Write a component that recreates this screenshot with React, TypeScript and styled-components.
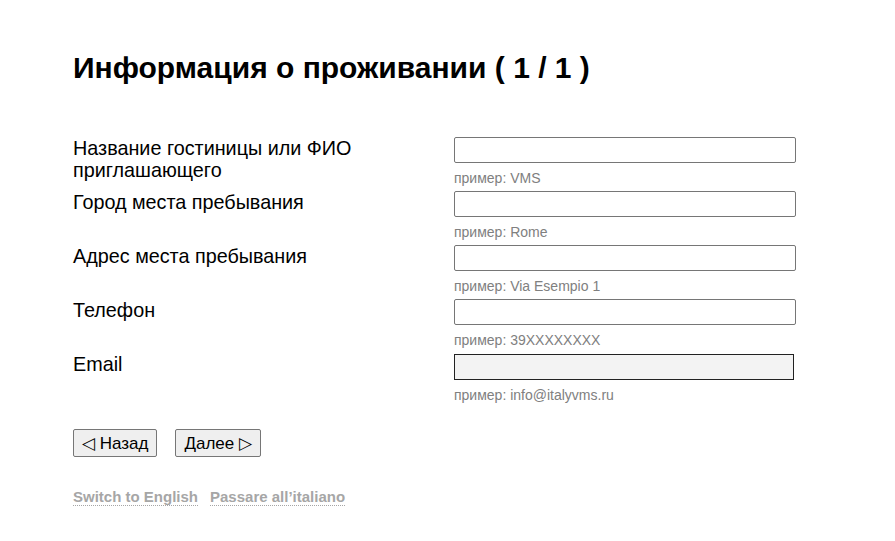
import styled, { createGlobalStyle } from "styled-components"

const GlobalStyle = createGlobalStyle`
    body {
        margin: 0;
        background: #ffffff;
        font-family: "Liberation Sans", Arial, sans-serif;
        color: #000000;
    }
`

type FieldType = {
    label: string
    hint: string
    readOnly?: boolean
}

const fields: FieldType[] = [
    { label: "Название гостиницы или ФИО приглашающего", hint: "пример: VMS" },
    { label: "Город места пребывания", hint: "пример: Rome" },
    { label: "Адрес места пребывания", hint: "пример: Via Esempio 1" },
    { label: "Телефон", hint: "пример: 39XXXXXXXX" },
    { label: "Email", hint: "пример: info@italyvms.ru", readOnly: true },
]

export default function App() {
    return (
        <Page>
            <GlobalStyle />
            <Title>Информация о проживании ( 1 / 1 )</Title>
            <Form>
                {fields.map((f) => (
                    <Row key={f.label}>
                        <Label>{f.label}</Label>
                        <FieldBox>
                            <Input type="text" $muted={f.readOnly} />
                            <Hint>{f.hint}</Hint>
                        </FieldBox>
                    </Row>
                ))}
            </Form>
            <Buttons>
                <NavButton type="button">◁ Назад</NavButton>
                <NavButton type="button">Далее ▷</NavButton>
            </Buttons>
            <Langs>
                <LangLink href="#">Switch to English</LangLink>
                <LangLink href="#">Passare all’italiano</LangLink>
            </Langs>
        </Page>
    )
}

const Page = styled.div`
    padding: 48px 0 0 73px;
    width: 723px;
`

const Title = styled.h1`
    margin: 0;
    font-size: 30px;
    font-weight: 700;
    line-height: 40px;
`

const Form = styled.div`
    margin-top: 49px;
    display: flex;
    flex-direction: column;
`

const Row = styled.div`
    display: grid;
    grid-template-columns: 381px 342px;
    height: 54px;
`

const Label = styled.div`
    font-size: 19.8px;
    line-height: 22px;
    padding-right: 60px;
`

const FieldBox = styled.div`
    display: flex;
    flex-direction: column;
`

const Input = styled.input<{ $muted?: boolean }>`
    box-sizing: border-box;
    height: 26px;
    width: ${(p) => (p.$muted ? "340px" : "342px")};
    margin: ${(p) => (p.$muted ? "1px 0 0" : "0")};
    border: 1px solid ${(p) => (p.$muted ? "#222222" : "#767676")};
    border-radius: ${(p) => (p.$muted ? "0" : "2px")};
    background: ${(p) => (p.$muted ? "#f3f3f3" : "#ffffff")};
    font-size: 14px;
    padding: 2px 4px;
`

const Hint = styled.div`
    font-size: 14px;
    line-height: 16px;
    color: #808080;
    padding-top: 7px;
`

const Buttons = styled.div`
    display: flex;
    gap: 18px;
    margin-top: 22px;
`

const NavButton = styled.button`
    box-sizing: border-box;
    height: 28px;
    padding: 0 8px;
    font-family: "Liberation Sans", Arial, sans-serif;
    font-size: 17px;
    color: #000000;
    background: #efefef;
    border: 1px solid #767676;
    border-radius: 2px;
`

const Langs = styled.div`
    display: flex;
    gap: 12px;
    margin-top: 31px;
`

const LangLink = styled.a`
    font-size: 15px;
    font-weight: 700;
    color: #a6a6a6;
    text-decoration: none;
    border-bottom: 1px dotted #a6a6a6;
    line-height: 17px;
`
